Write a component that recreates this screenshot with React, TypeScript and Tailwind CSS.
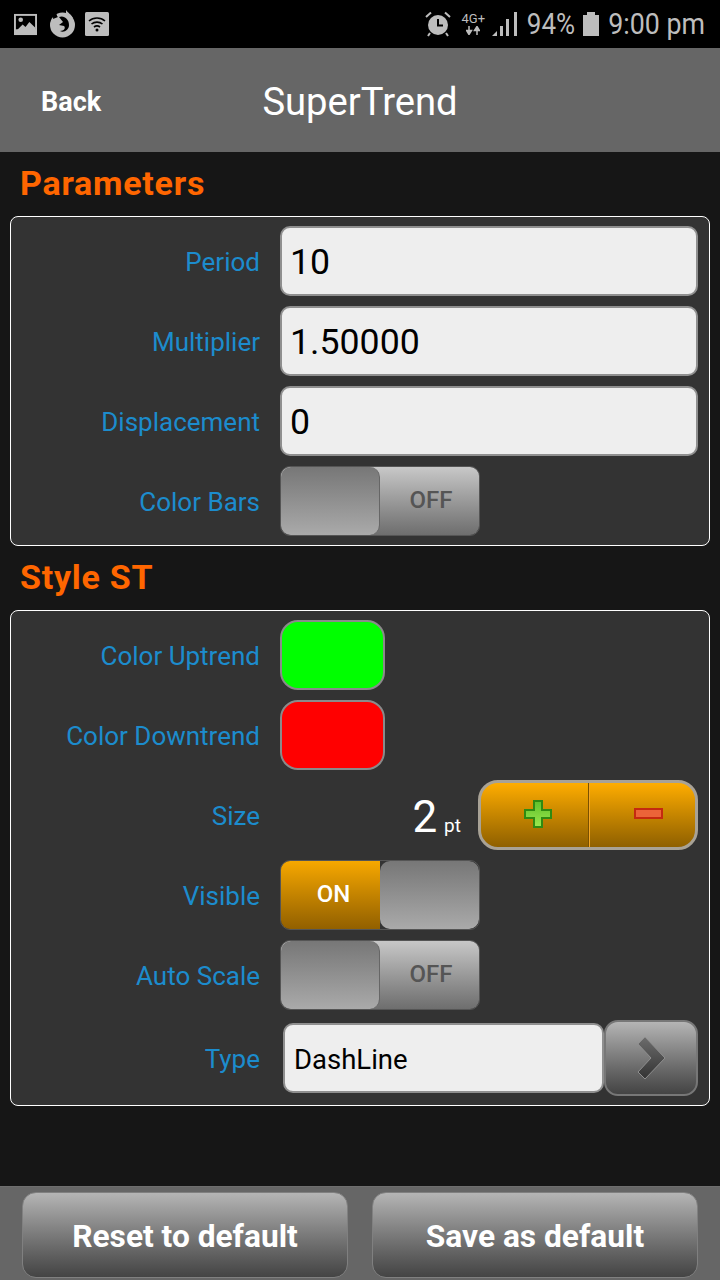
import React from "react";

const Row = ({ label, children }: { label: string; children: React.ReactNode }) => {
  return (
    <div className="flex items-center">
      <div className="w-[249px] shrink-0 pt-[2px] text-right text-[26px] leading-none text-[#1c8ccd]">{label}</div>
      <div className="ml-5 flex flex-1 items-center">{children}</div>
    </div>
  );
};

const TextBox = ({ value }: { value: string }) => {
  return (
    <div className="flex h-[70px] w-[418px] items-center rounded-[10px] border-2 border-[#8f8f8f] bg-[#eeeeee] pl-[8px] pt-[4px] text-[35.7px] text-black">
      {value}
    </div>
  );
};

const Toggle = ({ on }: { on: boolean }) => {
  return (
    <div className="flex h-[70px] w-[200px] overflow-hidden rounded-[10px] border border-[#555]">
      {on ? (
        <>
          <div className="flex w-[100px] items-center justify-center bg-gradient-to-b from-[#f7a800] to-[#926000] pb-[2px] pl-[6px] text-[24px] font-medium text-white">
            ON
          </div>
          <div className="w-[100px] rounded-[10px] bg-gradient-to-b from-[#777777] to-[#aaaaaa]" />
        </>
      ) : (
        <div className="flex w-full bg-gradient-to-b from-[#c8c8c8] to-[#6e6e6e]">
          <div className="w-[99px] rounded-[10px] border-r border-[#666] bg-gradient-to-b from-[#777777] to-[#aaaaaa]" />
          <div className="flex flex-1 items-center justify-center pb-[3px] pl-[3px] text-[24px] font-medium text-[#555]">OFF</div>
        </div>
      )}
    </div>
  );
};

const Swatch = ({ color }: { color: string }) => {
  return <div className={`h-[70px] w-[105px] rounded-[18px] border-2 border-[#8a8a8a] ${color}`} />;
};

const StatusBar = () => {
  return (
    <div className="flex h-12 items-center justify-between bg-black pl-[14px] pr-[15px] text-[#bdbdbd]">
      <div className="flex items-center">
        <svg width="23" height="23" viewBox="0 0 24 24">
          <rect x="0" y="1" width="24" height="22" fill="#bdbdbd" />
          <rect x="2" y="3" width="20" height="14" fill="#000" />
          <circle cx="7" cy="7" r="2.4" fill="#bdbdbd" />
          <path d="M2 19 L9 12 L12 14.5 L16 9.5 L22 15 V21 H2 Z" fill="#bdbdbd" />
        </svg>
        <svg className="ml-[12px]" width="27" height="28" viewBox="0 0 27 28">
          <circle cx="13.500" cy="15" r="12.500" fill="#bdbdbd" />
          <path d="M17 0 C19 3 22 4 24 8 L17 8 Z" fill="#bdbdbd" />
          <path d="M5 3 L9 7 L4 9 Z" fill="#000" />
          <path d="M10 7 C15 5 20 9 20 15 C20 20 15 23 11 21 C15 21 17 18 15 16 L10 15 L14 12 Z" fill="#000" />
          <path d="M3 3 L7 2 L8 6 L4 8 Z" fill="#000" />
        </svg>
        <svg className="ml-[9px]" width="24" height="24" viewBox="0 0 24 24">
          <rect x="0" y="0" width="24" height="24" rx="1.5" fill="#bdbdbd" />
          <path d="M4 9 C8.500 5 15.500 5 20 9 M6.500 12 C9.500 9.500 14.500 9.500 17.500 12 M9 15 C10.800 13.600 13.200 13.600 15 15" fill="none" stroke="#000" strokeWidth="1.6" />
          <circle cx="12" cy="18" r="1.500" fill="#000" />
        </svg>
      </div>
      <div className="flex items-center">
        <svg width="26" height="26" viewBox="0 0 26 26">
          <circle cx="13" cy="14" r="10" fill="#bdbdbd" />
          <path d="M13 8 V14.500 H18" fill="none" stroke="#000" strokeWidth="2" />
          <path d="M1 6 L6 1.500 M25 6 L20 1.500 M5 22 L3 25 M21 22 L23 25" stroke="#bdbdbd" strokeWidth="2" />
        </svg>
        <div className="ml-[10px] flex w-[25px] flex-col items-center leading-none">
          <span className="text-[13px] leading-[13px]">4G+</span>
          <svg className="mt-[1px]" width="14" height="9" viewBox="0 0 14 9">
            <path d="M3 0 V5 M0.500 4.500 L3 8.500 L5.500 4.500 Z M11 9 V4 M8.500 4.500 L11 0.500 L13.500 4.500 Z" fill="#bdbdbd" stroke="#bdbdbd" strokeWidth="1.500" />
          </svg>
        </div>
        <svg className="ml-[6px]" width="25" height="24" viewBox="0 0 25 24">
          <path d="M0 24 L5 19 V24 Z" fill="#bdbdbd" />
          <rect x="8" y="14" width="3" height="10" fill="#bdbdbd" />
          <rect x="14" y="7" width="3" height="17" fill="#bdbdbd" />
          <rect x="22" y="0" width="3" height="24" fill="#bdbdbd" />
        </svg>
        <span className="ml-[10px] origin-center scale-y-[1.15] text-[26px] leading-none">94%</span>
        <svg className="ml-[8px]" width="16" height="24" viewBox="0 0 16 24">
          <rect x="4" y="0" width="8" height="3" fill="#bdbdbd" />
          <rect x="0" y="3" width="16" height="21" fill="#bdbdbd" />
        </svg>
        <span className="ml-[9px] origin-center scale-y-[1.12] text-[26.8px] leading-none">9:00 pm</span>
      </div>
    </div>
  );
};

export default function App() {
  return (
    <div className="flex h-[1280px] w-[720px] flex-col overflow-hidden bg-[#161616] font-['Roboto',sans-serif]">
      <StatusBar />

      <div className="relative flex h-[104px] items-center justify-center bg-[#666666]">
        <span className="absolute left-[41px] pt-[4px] text-[27px] font-bold text-white">Back</span>
        <span className="pt-[6px] text-[38.2px] text-white">SuperTrend</span>
      </div>

      <div className="flex flex-1 flex-col">
        <div className="flex h-16 items-center pb-[1px] pl-5 text-[34px] font-bold tracking-[0.75px] text-[#ff6600]">Parameters</div>
        <div className="mx-[10px] flex flex-col gap-[10px] rounded-[8px] border border-white bg-[#333333] py-[9px]">
          <Row label="Period"><TextBox value="10" /></Row>
          <Row label="Multiplier"><TextBox value="1.50000" /></Row>
          <Row label="Displacement"><TextBox value="0" /></Row>
          <Row label="Color Bars"><Toggle on={false} /></Row>
        </div>

        <div className="flex h-16 items-center pb-[1px] pl-5 text-[34px] font-bold tracking-[0.75px] text-[#ff6600]">Style ST</div>
        <div className="mx-[10px] flex flex-col gap-[10px] rounded-[8px] border border-white bg-[#333333] pb-[9px] pt-[9px]">
          <Row label="Color Uptrend"><Swatch color="bg-[#00ff00]" /></Row>
          <Row label="Color Downtrend"><Swatch color="bg-[#ff0000]" /></Row>
          <Row label="Size">
            <div className="flex w-[198px] items-baseline justify-end pr-[17px] pt-[4px] text-white">
              <span className="text-[44px] leading-none">2</span>
              <span className="ml-[7px] text-[19px] leading-none">pt</span>
            </div>
            <div className="flex h-[70px] w-[220px] overflow-hidden rounded-[20px] border-[3px] border-[#a8a296] bg-gradient-to-b from-[#ffad00] to-[#8f6000]">
              <div className="flex w-[108px] items-center justify-center border-r border-[#7a5000] pb-[2px] pl-[6px]">
                <svg width="28" height="28" viewBox="0 0 28 28">
                  <defs>
                    <linearGradient id="plusFill" x1="0" y1="0" x2="0" y2="1">
                      <stop offset="0" stopColor="#5fc02a" />
                      <stop offset="1" stopColor="#9be84f" />
                    </linearGradient>
                  </defs>
                  <path d="M10 1 H18 V10 H27 V18 H18 V27 H10 V18 H1 V10 H10 Z" fill="url(#plusFill)" stroke="#2f8a12" strokeWidth="2" />
                </svg>
              </div>
              <div className="flex flex-1 items-center justify-center border-l border-[#f5a623] pb-[4px] pl-[12px]">
                <svg width="29" height="11" viewBox="0 0 29 11">
                  <rect x="1" y="1" width="27" height="9" fill="#ec6438" stroke="#c42a10" strokeWidth="2" />
                </svg>
              </div>
            </div>
          </Row>
          <Row label="Visible"><Toggle on={true} /></Row>
          <Row label="Auto Scale"><Toggle on={false} /></Row>
          <Row label="Type">
            <div className="ml-[3px] flex h-[70px] w-[321px] items-center rounded-[10px] border-2 border-[#8f8f8f] bg-[#eeeeee] pl-[9px] pt-[4px] text-[27.5px] text-black">
              DashLine
            </div>
            <div className="flex h-[76px] w-[94px] items-center justify-center rounded-[14px] border-2 border-[#777] bg-gradient-to-b from-[#b5b5b5] to-[#444444]">
              <svg width="30" height="44" viewBox="0 0 30 44">
                <defs>
                  <linearGradient id="chevronFill" x1="0" y1="0" x2="0" y2="1">
                    <stop offset="0" stopColor="#6c6c6c" />
                    <stop offset="1" stopColor="#333333" />
                  </linearGradient>
                </defs>
                <path d="M2 8 L9 1 L29 22 L9 43 L2 36 L15 22 Z" fill="url(#chevronFill)" stroke="#8f8f8f" strokeWidth="1" />
              </svg>
            </div>
          </Row>
        </div>
      </div>

      <div className="flex h-[94px] justify-between border-t border-[#6e6e6e] bg-[#666666] px-[22px] pt-[5px]">
        <div className="flex h-[86px] w-[326px] items-center justify-center rounded-[14px] border border-[#808080] bg-gradient-to-b from-[#b5b5b5] to-[#444444] pt-[4px] text-[31.7px] font-bold text-white">
          Reset to default
        </div>
        <div className="flex h-[86px] w-[326px] items-center justify-center rounded-[14px] border border-[#808080] bg-gradient-to-b from-[#b5b5b5] to-[#444444] pt-[4px] text-[31.7px] font-bold text-white">
          Save as default
        </div>
      </div>
    </div>
  );
}
